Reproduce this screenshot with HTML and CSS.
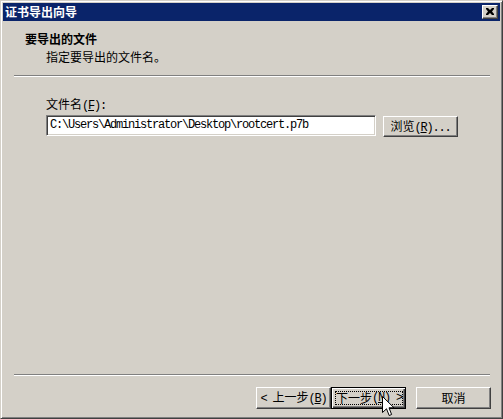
FILE: index.html
```html
<!DOCTYPE html>
<html lang="zh">
<head>
<meta charset="utf-8">
<title>证书导出向导</title>
<link rel="stylesheet" href="styles.css">
</head>
<body>
<div class="window">
  <div class="titlebar">
    <span class="title">证书导出向导</span>
    <button class="close" aria-label="关闭">
      <svg width="8" height="7" viewBox="0 0 8 7"><path d="M0 0h2l2 2 2-2h2v1l-2 2.5 2 2.5v1h-2l-2-2-2 2h-2v-1l2-2.5-2-2.5z" fill="#000"/></svg>
    </button>
  </div>
  <div class="header">
    <div class="h-title">要导出的文件</div>
    <div class="h-sub">指定要导出的文件名。</div>
  </div>
  <div class="sep"></div>
  <div class="body">
    <div class="label">文件名<span class="h">(<u>F</u>):</span></div>
    <div class="row">
      <div class="input">C:\Users\Administrator\Desktop\rootcert.p7b</div>
      <button class="btn browse">浏览<span class="h">(<u>R</u>)...</span></button>
    </div>
  </div>
  <div class="sep"></div>
  <div class="footer">
    <button class="btn"><span class="h">&lt; </span>上一步<span class="h">(<u>B</u>)</span></button>
    <button class="btn default"><span class="focus">下一步<span class="h">(<u>N</u>) &gt;</span></span></button>
    <button class="btn cancel">取消</button>
  </div>
  <svg class="cursor" width="13" height="21" viewBox="0 0 13 21"><path d="M0.5 0.5 L0.5 16.5 L4.5 12.8 L7.2 19.5 L9.6 18.5 L7 11.8 L12 11.8 Z" fill="#fff" stroke="#000" stroke-width="1"/></svg>
</div>
</body>
</html>
```

FILE: styles.css
```css
html, body {
  margin: 0;
  padding: 0;
  background: #d4d0c8;
}
body {
  font-family: "Noto Sans CJK SC", "Liberation Sans", sans-serif;
  font-size: 12px;
  color: #000;
}
.window {
  position: relative;
  width: 503px;
  height: 419px;
  box-sizing: border-box;
  background: #d4d0c8;
  border: 1px solid;
  border-color: #d4d0c8 #404040 #404040 #d4d0c8;
  box-shadow: inset 1px 1px #fff, inset -1px -1px #808080;
  padding: 2px;
  display: flex;
  flex-direction: column;
}
.titlebar {
  height: 18px;
  background: #0a246a;
  display: flex;
  align-items: center;
  justify-content: space-between;
  padding: 0 2px 0 2px;
}
.title {
  color: #fff;
  font-weight: bold;
  font-size: 12px;
  line-height: 14px;
}
.close {
  width: 16px;
  height: 14px;
  padding: 0;
  margin: 0;
  box-sizing: border-box;
  background: #d4d0c8;
  border: 1px solid;
  border-color: #fff #404040 #404040 #fff;
  box-shadow: inset -1px -1px #808080;
  display: flex;
  align-items: center;
  justify-content: center;
}
.close svg { display: block; margin-top: -1px; margin-left: -1px; }
.header {
  height: 54px;
  box-sizing: border-box;
  padding: 10px 0 0 22px;
}
.h-title {
  font-weight: bold;
  line-height: 16px;
}
.h-sub {
  line-height: 16px;
  margin-left: 21px;
  margin-top: 2px;
}
.sep {
  height: 0;
  margin: 0 10px 0 11px;
  border-top: 1px solid #808080;
  border-bottom: 1px solid #fff;
}
.body {
  flex: 1;
  padding: 19px 0 0 43px;
}
.label {
  line-height: 16px;
}
.h {
  font-family: "Liberation Mono", "DejaVu Sans Mono", monospace;
  letter-spacing: -1.2px;
  white-space: pre;
}
.row {
  display: flex;
  align-items: flex-start;
  gap: 7px;
  margin-top: 1px;
}
.input {
  width: 330px;
  height: 21px;
  box-sizing: border-box;
  background: #fff;
  border: 1px solid;
  border-color: #808080 #fff #fff #808080;
  box-shadow: inset 1px 1px #404040, inset -1px -1px #d4d0c8;
  font-family: "Liberation Mono", "DejaVu Sans Mono", monospace;
  font-size: 12px;
  letter-spacing: -1.2px;
  line-height: 19px;
  padding-left: 3px;
  white-space: nowrap;
  overflow: hidden;
}
.btn {
  width: 75px;
  height: 22px;
  box-sizing: border-box;
  margin: 0;
  padding: 0;
  background: #d4d0c8;
  border: 1px solid;
  border-color: #fff #404040 #404040 #fff;
  box-shadow: inset -1px -1px #808080;
  font-family: inherit;
  font-size: 12px;
  color: #000;
  line-height: 18px;
  text-align: center;
  white-space: nowrap;
}
.btn u { text-decoration: underline; }
.browse {
  margin-top: 1px;
  height: 21px;
}
.footer {
  height: 40px;
  box-sizing: border-box;
  display: flex;
  justify-content: flex-end;
  align-items: flex-start;
  padding: 11px 9px 0 0;
}
.default {
  border: 1px solid #000;
  box-shadow: inset 1px 1px #fff, inset -1px -1px #404040, inset -2px -2px #808080;
  padding: 3px;
  display: flex;
  align-items: stretch;
}
.focus {
  flex: 1;
  border: 1px dotted #000;
  line-height: 12px;
  display: flex;
  align-items: center;
  justify-content: center;
}
.cancel {
  margin-left: 10px;
}
.cursor {
  position: absolute;
  left: 381px;
  top: 395px;
}
```
